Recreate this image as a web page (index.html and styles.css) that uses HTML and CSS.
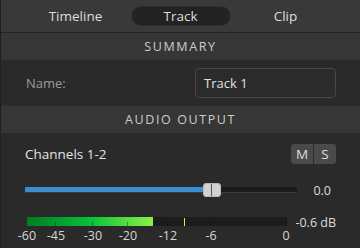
FILE: index.html
```html
<!DOCTYPE html>
<html>
<head>
<meta charset="utf-8">
<link rel="stylesheet" href="styles.css">
</head>
<body>
<div class="panel">
  <div class="tabs">
    <div class="tab">Timeline</div>
    <div class="tab active">Track</div>
    <div class="tab">Clip</div>
  </div>
  <div class="section-header">SUMMARY</div>
  <div class="name-row">
    <span class="label">Name:</span>
    <div class="input">Track 1</div>
  </div>
  <div class="section-header">AUDIO OUTPUT</div>
  <div class="audio">
    <div class="channels-row">
      <span class="channels">Channels 1-2</span>
      <div class="ms">
        <span class="ms-btn">M</span>
        <span class="ms-btn">S</span>
      </div>
    </div>
    <div class="slider-row">
      <div class="slider">
        <div class="slider-fill" style="width:186px"></div>
        <div class="slider-handle" style="left:178px"></div>
      </div>
      <span class="value">0.0</span>
    </div>
    <div class="meter-row">
      <div class="meter-col">
        <div class="meter">
          <div class="meter-fill" style="width:126px"></div>
          <span class="tick" style="left:28px"></span>
          <span class="tick" style="left:65px"></span>
          <span class="tick" style="left:100px"></span>
          <span class="tick" style="left:140px"></span>
          <span class="tick" style="left:183px"></span>
          <span class="tick" style="left:259px"></span>
          <span class="peak" style="left:157px"></span>
        </div>
        <div class="scale">
          <span style="left:0px">-60</span>
          <span style="left:29px">-45</span>
          <span style="left:66px">-30</span>
          <span style="left:101px">-20</span>
          <span style="left:141px">-12</span>
          <span style="left:184px">-6</span>
          <span style="left:259px">0</span>
        </div>
      </div>
      <span class="db">-0.6 dB</span>
    </div>
  </div>
</div>
</body>
</html>
```
FILE: styles.css
```css
* { box-sizing: border-box; }
html, body { margin: 0; padding: 0; background: #292929; }
body {
  width: 360px;
  height: 248px;
  overflow: hidden;
  font-family: "Open Sans", "Noto Sans", sans-serif;
  -webkit-font-smoothing: antialiased;
}
.panel {
  width: 360px;
  height: 248px;
  background: #292929;
  border-left: 1px solid #1f1f1f;
}
.tabs {
  height: 33px;
  background: #393939;
  border-bottom: 1px solid #242424;
  display: flex;
  justify-content: center;
  gap: 5px;
  padding-top: 6px;
}
.tab {
  width: 100px;
  height: 20px;
  line-height: 19px;
  text-align: center;
  font-size: 13.5px;
  color: #dedede;
  border-radius: 10px;
  border: 1px solid transparent;
}
.tab.active {
  background: #232323;
  border-color: #2f2f2f;
}
.section-header {
  height: 27px;
  background: #363636;
  color: #cccccc;
  font-size: 12.5px;
  letter-spacing: 1.6px;
  text-align: center;
  line-height: 27px;
}
.name-row {
  height: 46px;
  display: flex;
  align-items: center;
  justify-content: space-between;
  padding: 0 24px 0 25px;
  background: #2a2a2a;
}
.label {
  font-size: 13px;
  color: #9a9a9a;
}
.input {
  width: 141px;
  height: 30px;
  border: 1px solid #474747;
  border-radius: 4px;
  background: #2b2b2b;
  color: #e2e2e2;
  font-size: 13px;
  line-height: 28px;
  padding-left: 8px;
}
.audio {
  padding: 0 24px 0 24px;
  background: #2a2a2a;
  height: 115px;
}
.channels-row {
  display: flex;
  justify-content: space-between;
  align-items: center;
  height: 40px;
  padding-top: 1px;
}
.channels {
  font-size: 13.5px;
  color: #e4e4e4;
}
.ms {
  display: flex;
  gap: 1px;
  border-radius: 3px;
  overflow: hidden;
}
.ms-btn {
  width: 22px;
  height: 20px;
  background: #4a4a4a;
  color: #dedede;
  font-size: 13.5px;
  line-height: 20px;
  text-align: center;
}
.slider-row {
  display: flex;
  align-items: center;
  height: 36px;
  padding-bottom: 2px;
}
.slider {
  position: relative;
  width: 272px;
  height: 6px;
  background: #1b1b1b;
  border-bottom: 1px solid #3c3c3c;
}
.slider-fill {
  position: absolute;
  left: 0; top: 0;
  height: 5px;
  background: #3b8fd0;
}
.slider-handle {
  position: absolute;
  top: -4px;
  width: 18px;
  height: 14px;
  border-radius: 3px;
  background: #d2d2d2;
  border: 1px solid #b8b8b8;
}
.slider-handle::after {
  content: "";
  position: absolute;
  left: 7px; top: 0;
  width: 1px; height: 12px;
  background: #555;
}
.value {
  margin-left: auto;
  font-size: 12.5px;
  color: #dcdcdc;
  padding-right: 5px;
}
.meter-row {
  display: flex;
  align-items: flex-start;
  padding-top: 8px;
}
.meter-col {
  width: 262px;
  margin-left: 2px;
}
.meter {
  position: relative;
  width: 260px;
  height: 9px;
  background: #1c1c1c;
}
.meter-fill {
  position: absolute;
  left: 0; top: 0; bottom: 0;
  background: linear-gradient(90deg, #007c22 0%, #05c23a 50%, #8df043 100%);
}
.tick {
  position: absolute;
  bottom: 0;
  width: 1px;
  height: 4px;
  background: #3a3a3a;
}
.meter-fill ~ .tick { background: rgba(0,0,0,0.35); }
.peak {
  position: absolute;
  top: 1px;
  width: 1px;
  height: 8px;
  background: #e8e83a;
}
.scale {
  position: relative;
  height: 16px;
  margin-top: 2px;
}
.scale span {
  position: absolute;
  top: 0;
  transform: translateX(-50%);
  font-size: 12.5px;
  color: #d6d6d6;
  line-height: 16px;
}
.db {
  margin-left: auto;
  font-size: 12.5px;
  color: #dcdcdc;
  margin-top: -3px;
}
```
